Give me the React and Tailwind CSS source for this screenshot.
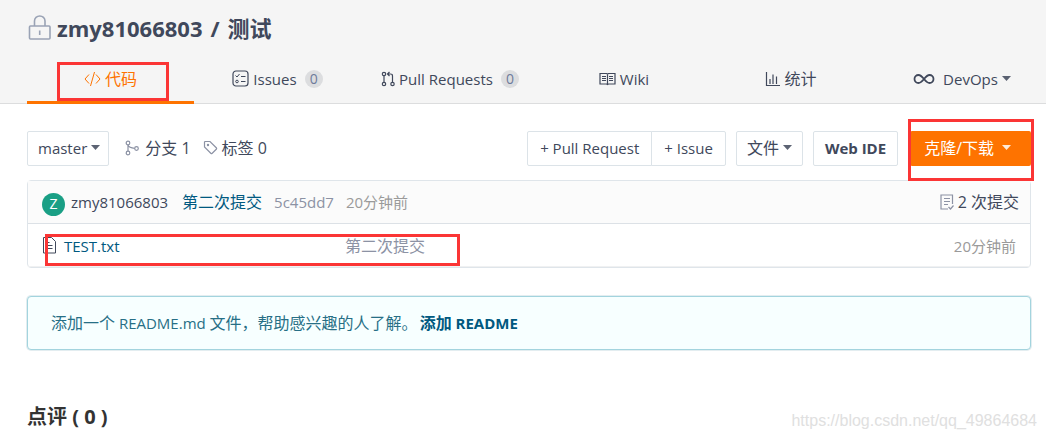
import React from 'react';

const tabs = [
  { label: '代码', icon: CodeIcon, active: true },
  { label: 'Issues', icon: IssueIcon, count: 0 },
  { label: 'Pull Requests', icon: PullIcon, count: 0 },
  { label: 'Wiki', icon: WikiIcon },
  { label: '统计', icon: ChartIcon, large: true },
  { label: 'DevOps', icon: InfinityIcon, caret: true },
];

const files = [{ name: 'TEST.txt', message: '第二次提交', time: '20分钟前' }];

function LockIcon() {
  return (
    <svg width="24" height="28" viewBox="0 0 24 28" fill="none" stroke="#9aa3b5" strokeWidth="1.6">
      <rect x="2.500" y="12" width="20.500" height="13" rx="1" />
      <path d="M7.500 12V7a5.200 5 0 0 1 10.500 0v5M12.700 16.500v4.500" />
    </svg>
  );
}

function CodeIcon() {
  return (
    <svg width="17" height="16" viewBox="0 0 17 16" fill="none" stroke="currentColor">
      <path d="M5 3.500 1 8l4 4.500M12 3.500 16 8l-4 4.500M10.500 1l-4 14" />
    </svg>
  );
}

function IssueIcon() {
  return (
    <svg width="17" height="17" viewBox="0 0 17 17" fill="none" stroke="currentColor">
      <rect x="1" y="1" width="15" height="15" rx="3" strokeWidth="1.2" />
      <path d="M3.500 5.500 5 7l2.500-3M9 6.500h4.500M9 11.500h4.500" />
      <circle cx="5" cy="11.500" r="1.300" />
    </svg>
  );
}

function PullIcon() {
  return (
    <svg width="14" height="16" viewBox="0 0 14 16" fill="none" stroke="currentColor" strokeWidth="1.200">
      <circle cx="3" cy="3" r="1.700" />
      <circle cx="3" cy="13" r="1.700" />
      <circle cx="11.500" cy="13" r="1.700" />
      <path d="M3 4.700v6.600M11.500 11.300V5q0-2-2-2H7M8.500 1 6.500 3l2 2" />
    </svg>
  );
}

function WikiIcon() {
  return (
    <svg width="17" height="14" viewBox="0 0 17 14" fill="none" stroke="currentColor">
      <path d="M1 1.500h6.500l1 .5 1-.5H16v10.500H9.500l-1 .5-1-.5H1zM8.500 2v10.500" strokeWidth="1.200" />
      <path d="M3 4.500h4M3 6.500h4M3 8.500h4M10 4.500h4M10 6.500h4M10 8.500h4" />
    </svg>
  );
}

function ChartIcon() {
  return (
    <svg width="15" height="16" viewBox="0 0 15 16" fill="none" stroke="currentColor">
      <path d="M1.500 1v13.500H15M5 13V8M8 13V3.500M11.500 13V5.500" strokeWidth="1.200" />
    </svg>
  );
}

function InfinityIcon() {
  return (
    <svg width="22" height="12" viewBox="0 0 22 12" fill="none" stroke="currentColor" strokeWidth="1.800">
      <path d="M11 6C9 3.500 7.500 2 5.500 2a4 4 0 0 0 0 8C7.500 10 9 8.500 11 6s3.500-4 5.500-4a4 4 0 0 1 0 8C14.500 10 13 8.500 11 6z" />
    </svg>
  );
}

function BranchIcon() {
  return (
    <svg width="14" height="16" viewBox="0 0 14 16" fill="none" stroke="#8c92a4" strokeWidth="1.200">
      <circle cx="3" cy="3" r="1.800" />
      <circle cx="3" cy="13" r="1.800" />
      <circle cx="11.500" cy="8.500" r="1.800" />
      <path d="M3 4.800v6.400M3 5q1 3 6.700 3.300" />
    </svg>
  );
}

function TagIcon() {
  return (
    <svg width="15" height="15" viewBox="0 0 15 15" fill="none" stroke="#8c92a4" strokeWidth="1.200">
      <path d="M1.500 2v5l6.500 6.500q.5.300 1 0L13.500 9q.4-.5 0-1L7 1.500H2z" />
      <circle cx="5" cy="5" r=".6" />
    </svg>
  );
}

function FileIcon() {
  return (
    <svg width="14" height="17" viewBox="0 0 14 17" fill="none" stroke="#40485b">
      <path d="M1.500.500h8l4 4v11.500h-12zM4 5.500h3.500M4 8.500h6.500M4 11.500h6.500" />
    </svg>
  );
}

function CommitsIcon() {
  return (
    <svg width="14" height="16" viewBox="0 0 14 16" fill="none" stroke="#8c92a4" strokeWidth="1.200">
      <path d="M12.500 10V1H1v14h7M4 4.500h6M4 7.500h6M4 10.500h4M8.500 13l2 2 3-3.500" />
    </svg>
  );
}

function Caret() {
  return (
    <svg width="9" height="5" viewBox="0 0 9 5" fill="currentColor" className="opacity-85">
      <path d="M0 0h9L4.500 5z" />
    </svg>
  );
}

// red frame that marks a spot on the page
function Mark({ className }) {
  return <span className={`pointer-events-none absolute z-10 border-3 border-[#fb3535] ${className}`} />;
}

function Tab({ tab }) {
  const Icon = tab.icon;
  return (
    <a
      href="#"
      className={`relative flex items-center justify-center gap-1 border-b-3 ${
        tab.active ? 'border-[#fe7300] text-base text-[#fe7300]' : 'border-transparent'
      } ${tab.large ? 'text-base' : ''} ${tab.caret ? 'pl-5' : ''}`}
    >
      <Icon />
      <span className={tab.caret ? 'ml-1' : ''}>{tab.label}</span>
      {tab.count !== undefined && (
        <span className="ml-1 rounded-full bg-[#dcdddf] px-[5px] text-sm leading-[18px] text-[#6e7b9b]">{tab.count}</span>
      )}
      {tab.caret && <Caret />}
      {tab.active && <Mark className="bottom-0 left-[30px] h-[39px] w-28" />}
    </a>
  );
}

export default function App() {
  const button = 'flex h-[35px] items-center gap-1 border border-[#dce3e8] bg-white pb-0.5';

  return (
    <div className="relative bg-white font-['Open_Sans','Noto_Sans_CJK_SC',sans-serif] text-[15px] leading-5 text-[#40485b]">
      <header className="border-b border-[#dcddde] bg-[#f5f5f5] pl-[27px] pr-[15px]">
        <h1 className="flex h-14 items-center text-[22px] font-bold">
          <LockIcon />
          <a href="#" className="ml-1.5">zmy81066803</a>
          <span className="mx-2">/</span>
          <a href="#">测试</a>
        </h1>
        <nav className="-mb-px grid h-12 grid-cols-[167fr_167fr_178fr_170fr_164fr_158fr]">
          {tabs.map((tab) => (
            <Tab key={tab.label} tab={tab} />
          ))}
        </nav>
      </header>

      <main className="pl-[27px] pr-[15px]">
        <div className="flex items-center pt-[27px]">
          <button type="button" className={`${button} rounded-xs pl-2.5 pr-2`}>
            master <Caret />
          </button>
          <a href="#" className="ml-4 flex items-center gap-1.5 pb-0.5 text-base leading-5">
            <BranchIcon /> 分支 1
          </a>
          <a href="#" className="ml-3 flex items-center gap-1 pb-0.5 text-base leading-5">
            <TagIcon /> 标签 0
          </a>

          <div className="ml-auto flex">
            <button type="button" className={`${button} rounded-l-xs px-3`}>+ Pull Request</button>
            <button type="button" className={`${button} -ml-px rounded-r-xs px-3`}>+ Issue</button>
          </div>
          <button type="button" className={`${button} ml-2.5 rounded-xs px-2.5 text-base`}>
            文件 <Caret />
          </button>
          <button type="button" className={`${button} ml-2.5 rounded-xs px-[11px] font-bold`}>Web IDE</button>
          <div className="relative ml-3">
            <button type="button" className="flex h-[35px] items-center gap-2 rounded-xs bg-[#fe7300] pb-0.5 pl-3.5 pr-5 text-base text-white">
              克隆/下载 <Caret />
            </button>
            <Mark className="-right-[3px] -bottom-[15px] -left-0.5 -top-3" />
          </div>
        </div>

        <section className="mt-3.5 rounded-sm border border-[#dfe5ea]">
          <div className="flex h-[43px] items-center border-b border-[#dce1e6] bg-[#fbfbfb] pl-3.5 pr-[11px]">
            <span className="mr-1.5 mt-1 flex size-[23px] items-center justify-center rounded-full bg-[#1a9f85] text-sm text-white">Z</span>
            <a href="#">zmy81066803</a>
            <a href="#" className="ml-3.5 text-base text-[#005980]">第二次提交</a>
            <span className="ml-3 text-[#8c92a4]">5c45dd7</span>
            <span className="ml-3 text-[#9a9a9a]">20分钟前</span>
            <a href="#" className="ml-auto flex items-center gap-1 text-base">
              <CommitsIcon /> 2 次提交
            </a>
          </div>
          <div className="relative">
            <table className="w-full table-fixed">
              <tbody>
                {files.map((file) => (
                  <tr key={file.name} className="h-[42px] border-b border-[#f0f1f2]">
                    <td className="w-[317px] pl-3.5 pt-0.5">
                      <a href="#" className="flex items-center gap-2 text-[#005980]">
                        <FileIcon /> {file.name}
                      </a>
                    </td>
                    <td className="pt-0.5 text-base leading-5 text-[#8c92a4]">{file.message}</td>
                    <td className="pr-3.5 pt-0.5 text-right text-[#9a9a9a]">{file.time}</td>
                  </tr>
                ))}
              </tbody>
            </table>
            <Mark className="left-[17px] top-2.5 h-8 w-[415px]" />
          </div>
        </section>

        <div className="mt-7 rounded-sm border border-[#a3d4de] bg-[#f7ffff] px-[23px] py-4 text-base leading-5 text-[#276f86] ring-1 ring-[#e3edf0]">
          添加一个<span className="text-[15px]"> README.md </span>文件，帮助感兴趣的人了解。
          <a href="#" className="ml-0.5 font-bold text-[#005980]">
            添加<span className="text-[15px]"> README</span>
          </a>
        </div>

        <h2 className="pb-3 pt-[55px] text-xl leading-6 font-bold text-[#333333]">点评 ( 0 )</h2>
      </main>

      <p className="absolute bottom-2 right-[9px] font-['Liberation_Sans',sans-serif] text-base text-[#e0e0e0]">
        https://blog.csdn.net/qq_49864684
      </p>
    </div>
  );
}
